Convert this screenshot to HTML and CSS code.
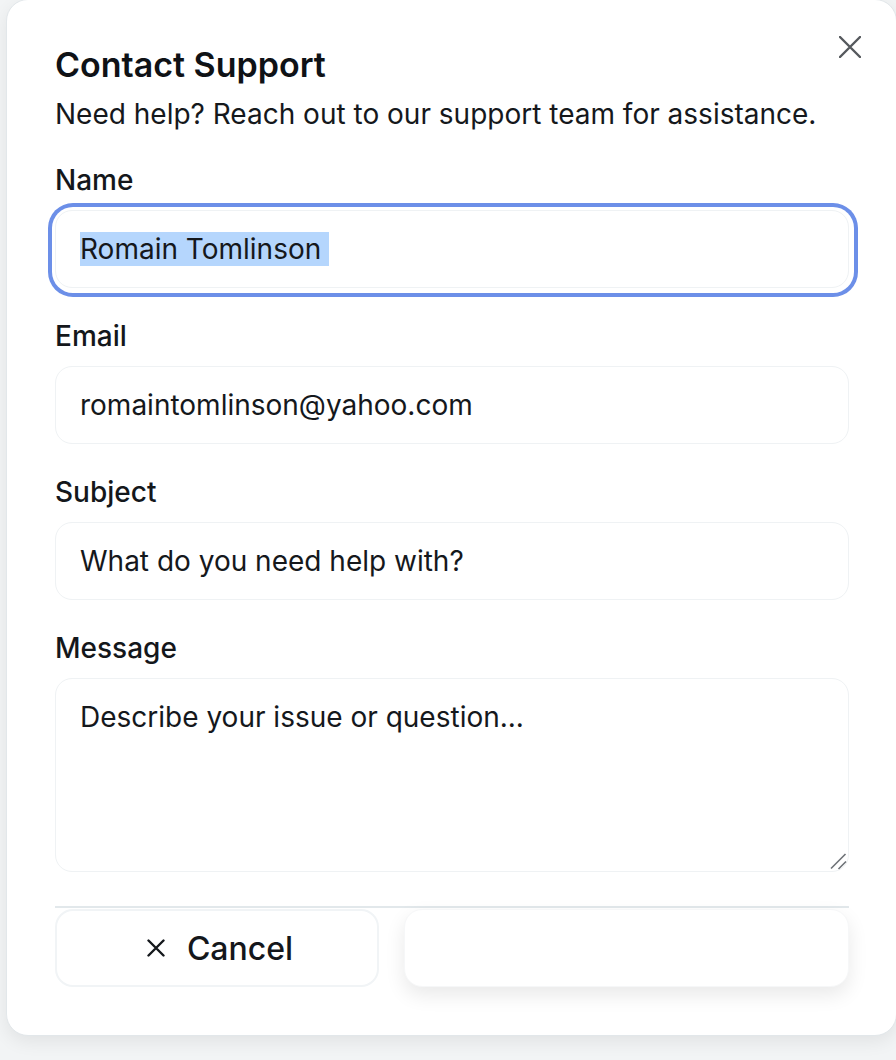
FILE: index.html
```html
<!DOCTYPE html>
<html lang="en">
<head>
<meta charset="utf-8">
<title>Contact Support</title>
<link rel="stylesheet" href="styles.css">
</head>
<body>
<div class="dialog">
  <button class="close" aria-label="Close">
    <svg width="22" height="22" viewBox="0 0 22 22"><path d="M1 1L21 21M21 1L1 21" stroke="#55595d" stroke-width="2.4" stroke-linecap="round" fill="none"/></svg>
  </button>
  <h2 class="title">Contact Support</h2>
  <p class="subtitle">Need help? Reach out to our support team for assistance.</p>
  <div class="field first">
    <label class="label">Name</label>
    <div class="input focused"><span class="sel">Romain Tomlinson&nbsp;</span></div>
  </div>
  <div class="field">
    <label class="label">Email</label>
    <div class="input">romaintomlinson@yahoo.com</div>
  </div>
  <div class="field">
    <label class="label">Subject</label>
    <div class="input">What do you need help with?</div>
  </div>
  <div class="field">
    <label class="label">Message</label>
    <div class="textarea-wrap">
      <textarea class="textarea">Describe your issue or question...</textarea>
      <svg class="resizer" width="18" height="18" viewBox="0 0 18 18"><path d="M2 16.5L16.5 2M9.5 17L17 9.5" stroke="#6f7378" stroke-width="1.6" fill="none"/></svg>
    </div>
  </div>
  <div class="footer">
    <button class="btn cancel">
      <svg width="18" height="18" viewBox="0 0 18 18"><path d="M1.5 1.5L16.5 16.5M16.5 1.5L1.5 16.5" stroke="#15181c" stroke-width="2.4" stroke-linecap="round" fill="none"/></svg>
      <span>Cancel</span>
    </button>
    <button class="btn submit"></button>
  </div>
</div>
</body>
</html>
```
FILE: styles.css
```css
* { box-sizing: border-box; }
html, body { margin: 0; padding: 0; }
body {
  background: #f2f4f5;
  font-family: Inter, "Noto Sans", sans-serif;
  color: #14171b;
  overflow: hidden;
  height: 1060px;
}
.dialog {
  position: relative;
  margin: -1px 0 0 6px;
  width: 891px;
  background: #fff;
  border: 1px solid #e2e7ea;
  border-radius: 22px;
  padding: 48px 47px 48px 48px;
  box-shadow: 0 6px 18px rgba(0, 0, 0, 0.07);
}
.close {
  position: absolute;
  top: 36px;
  right: 35px;
  width: 22px;
  height: 22px;
  padding: 0;
  border: 0;
  background: none;
  display: flex;
}
.title {
  margin: 0;
  font-size: 34px;
  line-height: 34px;
  font-weight: 600;
  color: #0f1216;
}
.subtitle {
  margin: 12px 0 0;
  font-size: 28px;
  line-height: 40px;
  color: #15181c;
}
.field { display: flex; flex-direction: column; gap: 10px; margin-top: 28px; }
.field.first { margin-top: 26px; }
.label {
  font-size: 28px;
  line-height: 40px;
  font-weight: 500;
  color: #14171b;
}
.input {
  height: 78px;
  border: 1px solid #eff2f4;
  border-radius: 17px;
  padding: 0 24px;
  display: flex;
  align-items: center;
  font-size: 28px;
  color: #15181c;
  background: #fff;
}
.input.focused {
  box-shadow: 1px 1px 0 4px #fff, 1px 1px 0 8px #6c8fe8;
  border-radius: 17px;
}
.sel {
  background: #b5d6fd;
  line-height: 34px;
}
.textarea-wrap { position: relative; }
.textarea {
  display: block;
  width: 100%;
  height: 194px;
  border: 1px solid #eff2f4;
  border-radius: 17px;
  padding: 18px 24px;
  font-family: Inter, "Noto Sans", sans-serif;
  font-size: 28px;
  line-height: 40px;
  color: #15181c;
  resize: none;
  outline: none;
  background: #fff;
}
.resizer {
  position: absolute;
  right: 2px;
  bottom: 2px;
}
.footer {
  margin-top: 34px;
  border-top: 2px solid #e2e8eb;
  padding-top: 1px;
  display: grid;
  grid-template-columns: 324px 1fr;
  gap: 25px;
}
.btn {
  height: 78px;
  border-radius: 18px;
  background: #fff;
  font-family: Inter, "Noto Sans", sans-serif;
}
.cancel {
  border: 2px solid #f1f4f6;
  display: flex;
  align-items: center;
  justify-content: center;
  gap: 22px;
  font-size: 32px;
  font-weight: 500;
  color: #14171b;
  padding: 0 0 0 6px;
}
.submit {
  border: 1px solid #f6f7f8;
  box-shadow: 0 8px 20px rgba(0, 0, 0, 0.09);
}
```
